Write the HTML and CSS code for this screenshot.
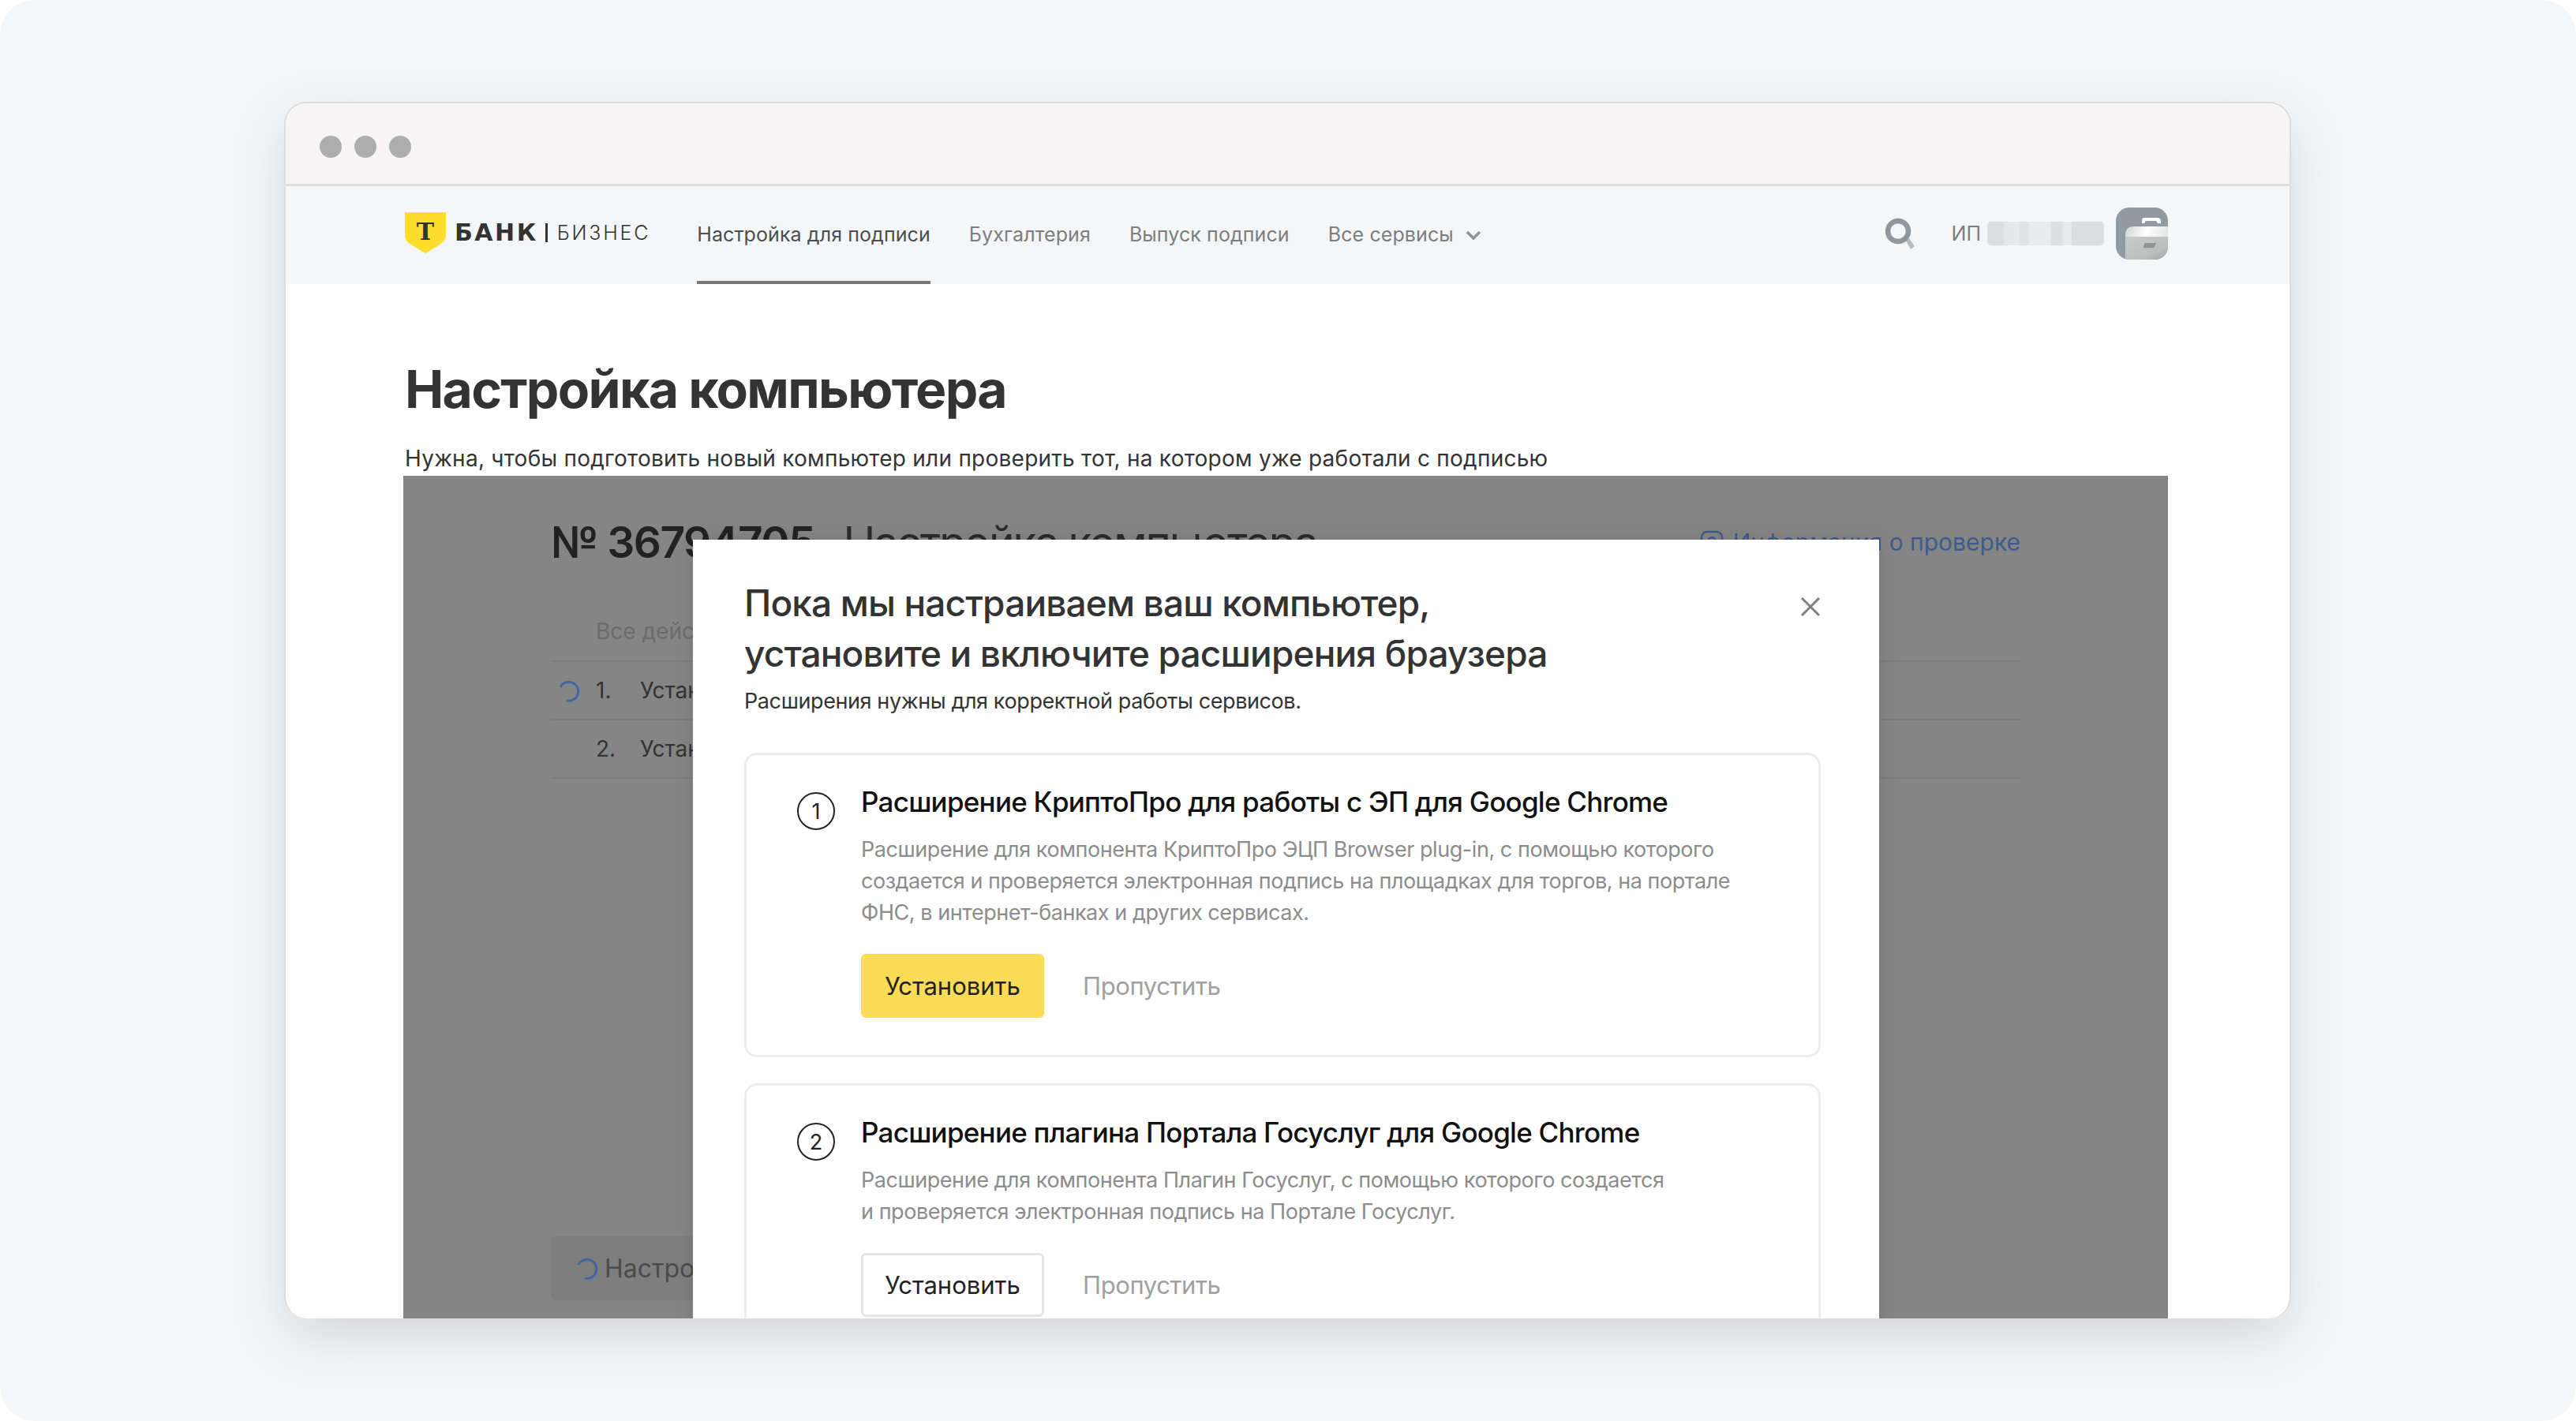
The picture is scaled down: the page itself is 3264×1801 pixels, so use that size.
FILE: index.html
```html
<!DOCTYPE html>
<html lang="ru">
<head>
    <meta charset="UTF-8">
    <title>Настройка компьютера</title>
    <link rel="stylesheet" href="styles.css">
</head>
<body>
    <div class="stage">
        <div class="window">
            <div class="toolbar">
                <span class="dot"></span>
                <span class="dot"></span>
                <span class="dot"></span>
            </div>

            <header class="topbar">
                <div class="logo">
                    <svg class="logo-shield" width="52" height="52" viewBox="0 0 52 52">
                        <path d="M0 0H52V30C52 36 47 39 41 43L26 52L11 43C5 39 0 36 0 30Z" fill="#ffdd2d"/>
                        <text x="26" y="35" text-anchor="middle" class="logo-t">T</text>
                    </svg>
                    <span class="logo-bank">БАНК</span>
                    <span class="logo-line"></span>
                    <span class="logo-biz">БИЗНЕС</span>
                </div>
                <nav class="nav">
                    <a class="nav-item active">Настройка для подписи</a>
                    <a class="nav-item">Бухгалтерия</a>
                    <a class="nav-item">Выпуск подписи</a>
                    <a class="nav-item">Все сервисы
                        <svg class="chevron" width="20" height="12" viewBox="0 0 20 12">
                            <path d="M2 2L10 10L18 2" fill="none" stroke="#8f959c" stroke-width="3.5"/>
                        </svg>
                    </a>
                </nav>
                <div class="account">
                    <svg class="search" width="38" height="40" viewBox="0 0 38 40">
                        <path d="M26 29L32 40L37 36L30 26Z" fill="#b9bcbf"/>
                        <circle cx="16" cy="17" r="13" fill="none" stroke="#8f969e" stroke-width="6.5"/>
                    </svg>
                    <span class="account-type">ИП</span>
                    <span class="account-name"></span>
                    <svg class="avatar" width="66" height="66" viewBox="0 0 66 66">
                        <defs>
                            <linearGradient id="caseTop" x1="0" y1="0" x2="1" y2="0.3">
                                <stop offset="0" stop-color="#d0d2d3"/>
                                <stop offset="0.5" stop-color="#ffffff"/>
                                <stop offset="1" stop-color="#e2e3e4"/>
                            </linearGradient>
                            <linearGradient id="caseBottom" x1="0" y1="0" x2="1" y2="1">
                                <stop offset="0" stop-color="#c9caca"/>
                                <stop offset="0.7" stop-color="#bcbdbd"/>
                                <stop offset="1" stop-color="#a0a1a1"/>
                            </linearGradient>
                        </defs>
                        <rect width="66" height="66" rx="17" fill="#9299a1"/>
                        <path d="M33 20V16C33 14 34 13 36 13H53C55 13 56 14 57 16V20H53L51 17H38L36 20Z" fill="#fff"/>
                        <path d="M12 66V34C12 28 16 24 22 24H66V39H12Z" fill="url(#caseTop)"/>
                        <path d="M12 37H66V49C66 59 59 66 49 66H12Z" fill="url(#caseBottom)"/>
                        <path d="M36 47C36 45 37 45 39 45H51L49 50C49 51 48 51 47 51H35Z" fill="#8f9499"/>
                    </svg>
                </div>
            </header>

            <main class="content">
                <h1 class="page-title">Настройка компьютера</h1>
                <p class="page-sub">Нужна, чтобы подготовить новый компьютер или проверить тот, на котором уже работали с подписью</p>

                <section class="panel">
                    <div class="check-head">
                        <h2 class="check-title"><b>№ 36794705</b> <span>Настройка компьютера</span></h2>
                        <a class="check-link">
                            <svg width="30" height="30" viewBox="0 0 30 30">
                                <rect x="2" y="2" width="26" height="26" rx="7" fill="none" stroke="#3f5b8e" stroke-width="2.5"/>
                                <circle cx="15" cy="13" r="4" fill="none" stroke="#3f5b8e" stroke-width="2.5"/>
                            </svg>
                            Информация о проверке
                        </a>
                    </div>
                    <div class="check-row check-row-head">Все действия</div>
                    <div class="check-row">
                        <svg class="spinner" width="28" height="28" viewBox="0 0 28 28">
                            <path d="M3 9A12 12 0 1 1 11 26" fill="none" stroke="#3f66a5" stroke-width="3"/>
                        </svg>
                        <span class="check-num">1.</span>
                        <span>Установка</span>
                    </div>
                    <div class="check-row">
                        <span class="check-num">2.</span>
                        <span>Установка</span>
                    </div>
                    <div class="check-btn">
                        <svg width="28" height="28" viewBox="0 0 28 28">
                            <path d="M3 9A12 12 0 1 1 11 26" fill="none" stroke="#3f66a5" stroke-width="3"/>
                        </svg>
                        Настройка
                    </div>

                    <div class="modal">
                        <div class="modal-head">
                            <h2 class="modal-title">Пока мы настраиваем ваш компьютер,<br>установите и включите расширения браузера</h2>
                            <svg class="modal-close" width="26" height="26" viewBox="0 0 26 26">
                                <path d="M2 2L24 24M24 2L2 24" stroke="#7f7f7f" stroke-width="3"/>
                            </svg>
                        </div>
                        <p class="modal-sub">Расширения нужны для корректной работы сервисов.</p>

                        <div class="ext-card">
                            <span class="ext-num">1</span>
                            <div class="ext-body">
                                <h3 class="ext-title">Расширение КриптоПро для работы с ЭП для Google Chrome</h3>
                                <p class="ext-desc">Расширение для компонента КриптоПро ЭЦП Browser plug-in, с помощью которого<br>создается и проверяется электронная подпись на площадках для торгов, на портале<br>ФНС, в интернет-банках и других сервисах.</p>
                                <div class="ext-actions">
                                    <button class="btn btn-primary">Установить</button>
                                    <span class="btn-skip">Пропустить</span>
                                </div>
                            </div>
                        </div>

                        <div class="ext-card">
                            <span class="ext-num">2</span>
                            <div class="ext-body">
                                <h3 class="ext-title">Расширение плагина Портала Госуслуг для Google Chrome</h3>
                                <p class="ext-desc">Расширение для компонента Плагин Госуслуг, с помощью которого создается<br>и проверяется электронная подпись на Портале Госуслуг.</p>
                                <div class="ext-actions">
                                    <button class="btn btn-outline">Установить</button>
                                    <span class="btn-skip">Пропустить</span>
                                </div>
                            </div>
                        </div>
                    </div>
                </section>
            </main>
        </div>
    </div>
</body>
</html>
```

FILE: styles.css
```css
* {
    margin: 0;
    padding: 0;
    box-sizing: border-box;
}

body {
    font-family: Inter, "Noto Sans", sans-serif;
    background-color: white;
    color: #333;
    overflow: hidden;
}

.stage {
    height: 1801px;
    padding: 129px 361px 130px 360px;
    background-color: #f5f6f8;
    border-radius: 44px;
}

.window {
    display: flex;
    flex-direction: column;
    height: 100%;
    background-color: white;
    border: 2px solid #dcdcdc;
    border-bottom: none;
    border-radius: 28px;
    box-shadow: 0 24px 70px rgba(0, 0, 0, 0.13);
    overflow: hidden;
}

.toolbar {
    display: flex;
    flex: none;
    align-items: center;
    gap: 16px;
    height: 105px;
    padding: 8px 0 0 43px;
    background-color: #f6f4f5;
    border-bottom: 3px solid #dcdcdc;
}

.dot {
    width: 28px;
    height: 28px;
    border-radius: 50%;
    background-color: #adadad;
}

.topbar {
    display: flex;
    flex: none;
    align-items: center;
    height: 124px;
    padding: 0 154px 0 151px;
    background-color: #f5f6f8;
}

.logo {
    display: flex;
    align-items: center;
    margin-right: 59px;
    padding-bottom: 6px;
}

.logo-shield {
    flex: none;
    margin-right: 11px;
}

.logo-t {
    font-family: "DejaVu Serif", serif;
    font-size: 30px;
    font-weight: 700;
    fill: #333;
}

.logo-bank {
    font-family: "DejaVu Sans", sans-serif;
    font-size: 30px;
    line-height: 32px;
    font-weight: 700;
    letter-spacing: 2.5px;
    color: #333;
}

.logo-line {
    width: 3px;
    height: 24px;
    margin: 0 12px 0 9px;
    background-color: #333;
}

.logo-biz {
    font-size: 25px;
    line-height: 32px;
    font-weight: 300;
    letter-spacing: 2.8px;
    color: #333;
}

.nav {
    display: flex;
    align-self: stretch;
    gap: 49px;
}

.nav-item {
    display: flex;
    align-items: center;
    gap: 15px;
    padding-bottom: 3px;
    font-size: 25px;
    letter-spacing: 0.1px;
    color: #7d7d7d;
}

.nav-item.active {
    color: #4d4d4d;
    box-shadow: inset 0 -4px 0 #777;
}

.chevron {
    margin-top: 3px;
}

.account {
    display: flex;
    align-items: center;
    margin-left: auto;
    padding-bottom: 5px;
}

.search {
    margin-right: 46px;
}

.account-type {
    margin-right: 8px;
    font-size: 25px;
    color: #7d7d7d;
}

.account-name {
    width: 148px;
    height: 30px;
    margin-right: 15px;
    border-radius: 5px;
    background: linear-gradient(90deg, #dcdddf 0 14%, #e6e7e9 14% 28%, #dfe1e3 28% 36%, #eaebec 36% 54%, #dedfe1 54% 64%, #e7e8ea 64% 72%, #dcdddf 72% 100%);
}

.content {
    display: flex;
    flex: 1;
    flex-direction: column;
    min-height: 0;
    padding: 0 154px 0 149px;
}

.page-title {
    margin-top: 93px;
    padding-left: 2px;
    font-size: 66px;
    line-height: 80px;
    font-weight: 700;
    letter-spacing: -1.7px;
    color: #333;
}

.page-sub {
    margin-top: 28px;
    padding-left: 2px;
    font-size: 28px;
    line-height: 40px;
    letter-spacing: 0.25px;
    color: #333;
}

.panel {
    position: relative;
    display: flex;
    flex: 1;
    flex-direction: column;
    min-height: 0;
    margin-top: 2px;
    padding: 54px 187px 23px;
    background-color: #858585;
    overflow: hidden;
}

.check-head {
    display: flex;
    justify-content: space-between;
    align-items: center;
    height: 60px;
    margin-bottom: 64px;
}

.check-title {
    font-size: 55px;
    font-weight: 400;
    white-space: nowrap;
    color: #2b2b2b;
}

.check-title b {
    margin-right: 21px;
    font-weight: 600;
    letter-spacing: -1.5px;
    color: #222;
}

.check-title span {
    letter-spacing: -2px;
}

.check-link {
    display: flex;
    align-items: center;
    gap: 12px;
    font-size: 30px;
    color: #3f5b8e;
}

.check-row {
    display: flex;
    align-items: center;
    flex: none;
    height: 74px;
    padding-left: 57px;
    position: relative;
    font-size: 28px;
    color: #333;
    border-bottom: 2px solid #7c7c7c;
}

.check-row-head {
    height: 58px;
    padding-bottom: 18px;
    color: #6b6b6b;
}

.spinner {
    position: absolute;
    left: 9px;
    top: 23px;
}

.check-num {
    width: 56px;
}

.check-btn {
    display: flex;
    align-items: center;
    gap: 8px;
    width: 320px;
    height: 81px;
    margin-top: auto;
    padding-left: 32px;
    font-size: 32px;
    color: #4b4b4b;
    background-color: #7e7e7e;
    border-radius: 6px;
}

.modal {
    position: absolute;
    left: 367px;
    top: 81px;
    width: 1503px;
    height: 1100px;
    padding: 48px 74px 0 65px;
    background-color: white;
    box-shadow: 0 0 24px rgba(0, 0, 0, 0.1);
}

.modal-head {
    display: flex;
    justify-content: space-between;
    align-items: flex-start;
}

.modal-title {
    font-size: 46px;
    line-height: 64px;
    font-weight: 500;
    letter-spacing: -0.85px;
    color: #333;
}

.modal-close {
    margin-top: 24px;
}

.modal-sub {
    margin-top: 9px;
    margin-bottom: 45px;
    font-size: 27px;
    line-height: 40px;
    letter-spacing: -0.4px;
    color: #333;
}

.ext-card {
    display: flex;
    gap: 33px;
    padding: 35px 40px 47px 64px;
    margin-bottom: 33px;
    border: 3px solid #ececec;
    border-radius: 16px;
}

.ext-num {
    display: flex;
    justify-content: center;
    align-items: center;
    flex: none;
    width: 48px;
    height: 48px;
    margin-top: 12px;
    border: 2.5px solid #222;
    border-radius: 50%;
    font-size: 27px;
    color: #222;
}

.ext-title {
    font-size: 35px;
    line-height: 48px;
    font-weight: 500;
    letter-spacing: -0.75px;
    color: #111;
}

.ext-desc {
    margin-top: 17px;
    font-size: 27px;
    line-height: 40px;
    letter-spacing: -0.45px;
    color: #8c8c8c;
}

.ext-actions {
    display: flex;
    align-items: center;
    gap: 49px;
    margin-top: 32px;
}

.btn {
    width: 232px;
    height: 81px;
    font-family: inherit;
    font-size: 31px;
    color: #222;
    border-radius: 6px;
    border: none;
}

.btn-primary {
    background-color: #fadb55;
}

.btn-outline {
    background-color: white;
    border: 3px solid #e4e4e4;
}

.btn-skip {
    font-size: 31px;
    letter-spacing: -0.4px;
    color: #a0a0a0;
}
```
